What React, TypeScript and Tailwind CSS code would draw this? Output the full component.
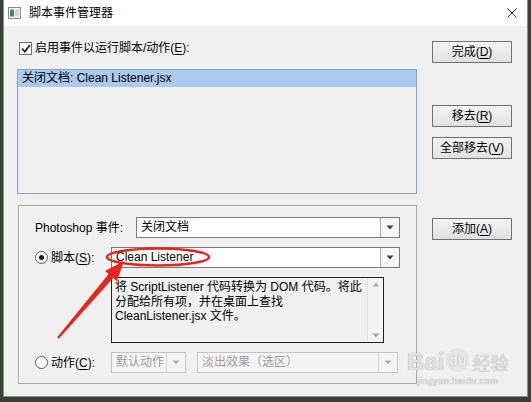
import React from 'react'

const font = { fontFamily: '"Liberation Sans", "Noto Sans CJK SC", sans-serif' }

function Caret({ disabled }: { disabled?: boolean }) {
  return (
    <svg width="8" height="5" viewBox="0 0 8 5">
      <path d="M0.5 0.5 L7.5 0.5 L4 4.5 Z" fill={disabled ? '#b4b4b4' : '#404040'} />
    </svg>
  )
}

function Select({ text, className, disabled }: { text: string; className: string; disabled?: boolean }) {
  return (
    <div
      className={`flex h-[21px] border ${
        disabled ? 'border-[#c4c4c4] bg-[#f4f4f4] text-[#9d9d9d]' : 'border-[#7a7a7a] bg-white text-black'
      } ${className}`}
    >
      <div className="flex-1 pl-[4px] leading-[19px] whitespace-nowrap overflow-hidden">{text}</div>
      <div
        className={`w-[19px] flex items-center justify-center border-l ${
          disabled ? 'border-[#d4d4d4]' : 'border-[#a8a8a8] bg-[#f7f7f7]'
        }`}
      >
        <Caret disabled={disabled} />
      </div>
    </div>
  )
}

function Button({ label, hot, className }: { label: string; hot: string; className: string }) {
  return (
    <button
      className={`w-[80px] h-[22px] border border-[#707070] bg-gradient-to-b from-[#f4f4f4] to-[#e0e0e0] text-[12px] leading-[20px] text-black ${className}`}
    >
      {label}(<span className="underline underline-offset-2">{hot}</span>)
    </button>
  )
}

function Radio({ checked }: { checked?: boolean }) {
  return (
    <span className="w-[13px] h-[13px] rounded-full border border-[#5a5a5a] bg-white flex items-center justify-center shrink-0">
      {checked && <span className="w-[5px] h-[5px] rounded-full bg-[#1a1a1a]" />}
    </span>
  )
}

export default function App() {
  return (
    <div className="relative w-[531px] h-[402px] bg-[#3a3f38] overflow-hidden text-[12px] text-black" style={font}>
      {/* Window */}
      <div className="ml-[3px] w-[525px] h-[397px] flex flex-col bg-[#f0f0f0] border-x border-b border-[#8c8c8c]">
        {/* Title bar */}
        <div className="h-[26px] bg-white flex items-center pl-[4px] pr-[10px] shrink-0">
          <svg width="13" height="12" viewBox="0 0 13 12" className="mr-[8px]">
            <rect x="0.5" y="0.5" width="12" height="11" fill="#f4f4f4" stroke="#8a8a8a" />
            <rect x="2" y="2.5" width="4" height="7" fill="#4f7f86" />
            <rect x="7" y="2.5" width="4" height="7" fill="#cfd6d8" />
          </svg>
          <span className="leading-[14px]">脚本事件管理器</span>
          <div className="flex-1" />
          <svg width="10" height="10" viewBox="0 0 10 10">
            <path d="M0.5 0.5 L9.5 9.5 M9.5 0.5 L0.5 9.5" stroke="#222" strokeWidth="1" />
          </svg>
        </div>

        {/* Body */}
        <div className="flex-1 flex pl-[13px]">
          {/* Left column */}
          <div className="w-[400px] pt-[15px]">
            <div className="flex items-center h-[14px] pl-[2px]">
              <span className="w-[13px] h-[13px] border border-[#707070] bg-white flex items-center justify-center mr-[3px]">
                <svg width="10" height="9" viewBox="0 0 10 9">
                  <path d="M1 4.5 L3.8 7.5 L9 1" fill="none" stroke="#222" strokeWidth="1.8" />
                </svg>
              </span>
              <span className="leading-[14px]">
                启用事件以运行脚本/动作(<span className="underline underline-offset-2">E</span>):
              </span>
            </div>

            {/* Event list */}
            <div className="mt-[14px] h-[125px] border border-[#8aa3bf] bg-[#f0f0f0]">
              <div className="h-[17px] bg-[#abcaf0] pl-[4px] leading-[17px]">关闭文档: Clean Listener.jsx</div>
            </div>

            {/* Group box */}
            <div className="mt-[11px] ml-[1px] h-[179px] border border-[#a8a8a8] shadow-[inset_1px_1px_0_#ffffff] pl-[16px] pr-[16px] pt-[11px]">
              <div className="flex items-center">
                <span className="w-[101px] leading-[14px]">Photoshop 事件:</span>
                <Select text="关闭文档" className="flex-1" />
              </div>

              <div className="flex items-center mt-[9px]">
                <div className="w-[76px] flex items-center">
                  <Radio checked />
                  <span className="ml-[3px] leading-[14px]">
                    脚本(<span className="underline underline-offset-2">S</span>):
                  </span>
                </div>
                <Select text="Clean Listener" className="flex-1" />
              </div>

              <div className="flex mt-[9px]">
                <div className="w-[76px]" />
                <div className="w-[273px] h-[66px] border border-[#222] flex">
                  <div className="flex-1 pl-[3px] pt-[2px] leading-[14.5px]">
                    将 ScriptListener 代码转换为 DOM 代码。将此
                    <br />
                    分配给所有项，并在桌面上查找
                    <br />
                    CleanListener.jsx 文件。
                  </div>
                  <div className="w-[16px] flex flex-col justify-between items-center bg-[#f4f4f4] border-l border-[#e2e2e2] py-[4px]">
                    <svg width="8" height="5" viewBox="0 0 8 5">
                      <path d="M0.5 4.5 L7.5 4.5 L4 0.5 Z" fill="#a8a8a8" />
                    </svg>
                    <svg width="8" height="5" viewBox="0 0 8 5">
                      <path d="M0.5 0.5 L7.5 0.5 L4 4.5 Z" fill="#a8a8a8" />
                    </svg>
                  </div>
                </div>
              </div>

              <div className="flex items-center mt-[9px]">
                <div className="w-[76px] flex items-center">
                  <Radio />
                  <span className="ml-[3px] leading-[14px]">
                    动作(<span className="underline underline-offset-2">C</span>):
                  </span>
                </div>
                <Select text="默认动作" className="w-[75px]" disabled />
                <Select text="淡出效果（选区）" className="flex-1 ml-[11px] mr-[2px]" disabled />
              </div>
            </div>
          </div>

          {/* Right column */}
          <div className="ml-[15px] pt-[15px] flex flex-col">
            <Button label="完成" hot="D" className="" />
            <Button label="移去" hot="R" className="mt-[42px]" />
            <Button label="全部移去" hot="V" className="mt-[10px]" />
            <Button label="添加" hot="A" className="mt-[59px]" />
          </div>
        </div>
      </div>

      {/* Baidu watermark */}
      <div className="absolute left-[407px] top-[348px] flex flex-col items-center text-[#e2e2e2] [text-shadow:0_0_1px_#9a9a9a]">
        <div className="flex items-end leading-[24px]">
          <span className="text-[24px] font-bold" style={{ fontFamily: '"Liberation Sans", sans-serif' }}>
            Bai
          </span>
          <span className="text-[14px] font-bold ml-[2px] mb-[2px] px-[3px] rounded-full bg-[#dcdcdc]/60 text-[#f0f0f0]">du</span>
          <span className="text-[18px] ml-[3px]" style={{ fontFamily: '"Noto Sans CJK SC", sans-serif' }}>
            经验
          </span>
        </div>
        <div className="text-[9px] leading-[11px] tracking-[0.5px] mt-[2px]">jingyan.baidu.com</div>
      </div>

      {/* Red annotation */}
      <svg className="absolute left-0 top-0 pointer-events-none" width="531" height="402" viewBox="0 0 531 402">
        <ellipse cx="158" cy="257" rx="51" ry="8.5" fill="none" stroke="#e8251c" strokeWidth="2.5" />
        <polygon
          points="124,261 116.9,281.3 113.2,278.1 58.8,338.7 57.2,337.3 108.6,274.1 104.9,270.9"
          fill="#e8251c"
        />
      </svg>
    </div>
  )
}
